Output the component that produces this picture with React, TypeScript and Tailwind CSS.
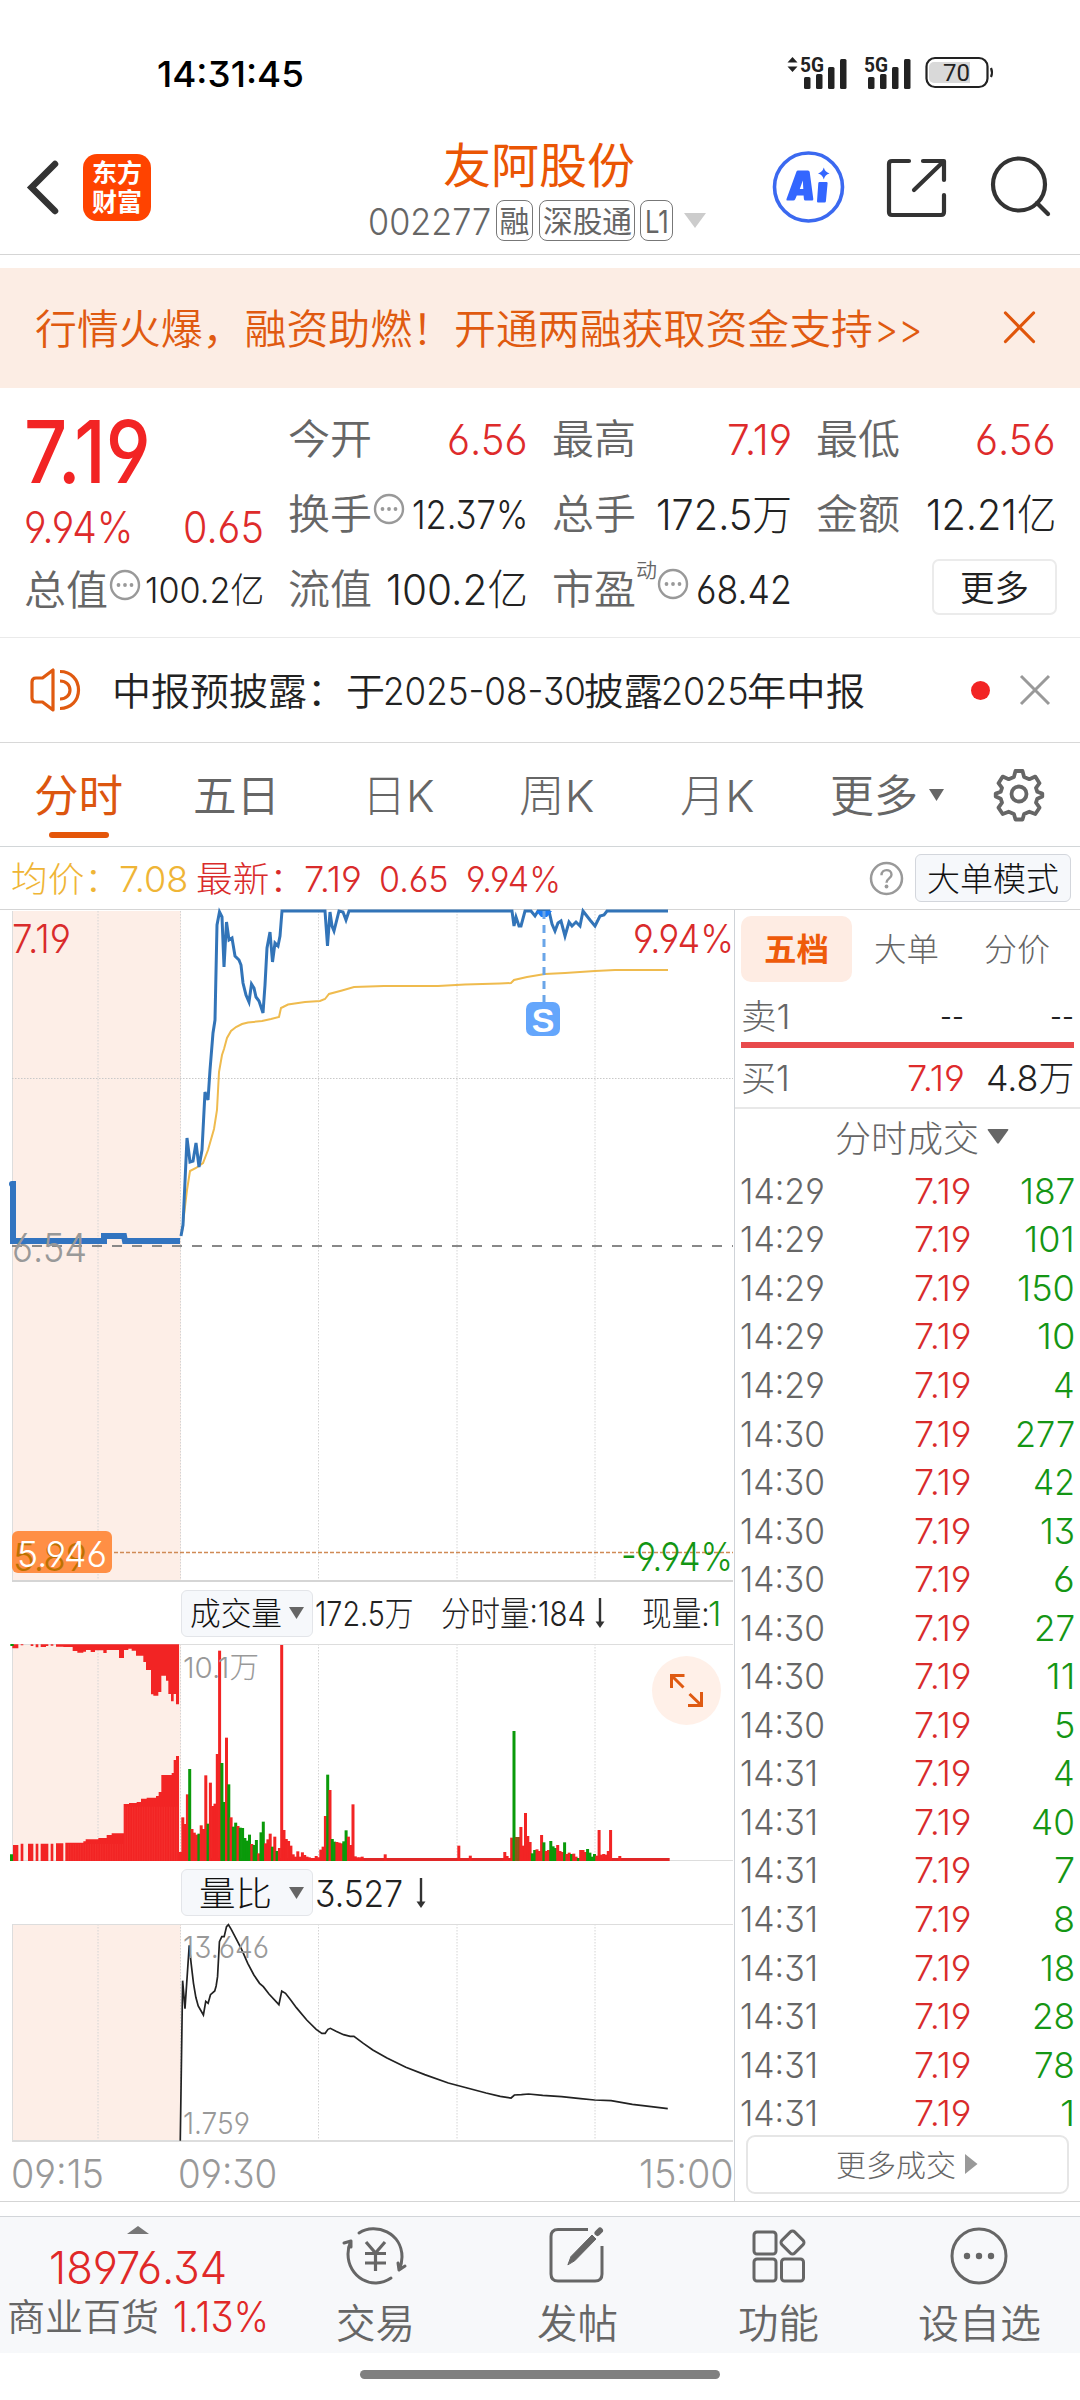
import { useLayoutEffect, useRef } from "react";
import type { ReactNode } from "react";

/** Single-line text that is stretched or condensed to fill the width given by its class. */
function Fit({ className, children }: { className: string; children: ReactNode }) {
  const outer = useRef<HTMLSpanElement>(null);
  const inner = useRef<HTMLSpanElement>(null);
  useLayoutEffect(() => {
    if (outer.current && inner.current) {
      const s = (outer.current.clientWidth + 2) / inner.current.offsetWidth;
      inner.current.style.transform = `translate(-1px, 1px) scaleX(${s})`;
    }
  }, []);
  return (
    <span ref={outer} className={`block shrink-0 whitespace-nowrap leading-none ${className}`}>
      <span ref={inner} className="inline-block origin-left whitespace-pre">
        {children}
      </span>
    </span>
  );
}

function Signal({ arrows }: { arrows?: boolean }) {
  return (
    <svg className="overflow-visible" width="64" height="36" viewBox="0 0 64 36" fill="#222">
      {arrows && <path d="M4.500 7.500 9.500 2l5 5.500zM4.500 11.500h10l-5 5.500z" />}
      <text x="17" y="17" fontSize="21" fontWeight="700" textLength="24" lengthAdjust="spacingAndGlyphs" fontFamily="Roboto, sans-serif">5G</text>
      <rect x="21" y="22" width="6.500" height="12" rx="1.500" />
      <rect x="33" y="19" width="6.500" height="15" rx="1.500" />
      <rect x="45" y="12" width="6.500" height="22" rx="1.500" />
      <rect x="57" y="4" width="6.500" height="30" rx="1.500" />
    </svg>
  );
}

function StatusBar() {
  return (
    <div className="flex h-[120px] items-center pt-[25px] pl-[158px]">
      <Fit className="w-[145px] text-[36px] font-medium text-black">14:31:45</Fit>
      <div className="ml-[480px] flex items-center">
        <Signal arrows />
        <Signal />
        <svg className="ml-[14px]" width="70" height="34" viewBox="0 0 70 34">
          <rect x="1.500" y="2" width="61" height="29" rx="8.500" fill="none" stroke="#222" strokeWidth="2.200" />
          <path d="M9 6h36v21H9a5 5 0 0 1-5-5V11a5 5 0 0 1 5-5z" fill="#d9d9d9" />
          <path d="M66 12q2 4.500 0 9" stroke="#222" strokeWidth="2.200" fill="none" />
          <text x="18" y="25" fontSize="24" textLength="27" fontFamily="Roboto, sans-serif" fill="#222">70</text>
        </svg>
      </div>
    </div>
  );
}

function Header() {
  return (
    <header className="flex h-[135px] border-b border-[#d5d5d5]">
      <svg className="mt-[38px] ml-[24px] shrink-0" width="38" height="60" viewBox="0 0 38 60" fill="none" stroke="#333" strokeWidth="6.500" strokeLinecap="round" strokeLinejoin="miter">
        <path d="M31 6 7.500 29.500 31 53" />
      </svg>
      <div className="mt-[34px] ml-[21px] flex h-[67px] w-[68px] shrink-0 flex-col items-center justify-center rounded-[14px] bg-[#ff4300] text-[25px] leading-[29px] font-bold text-white">
        <span>东方</span>
        <span>财富</span>
      </div>
      <div className="ml-[218px] w-[338px] shrink-0">
        <div className="mt-[21px] ml-[75px] text-[48px] leading-[50px] font-normal text-[#ea5504]">
          <Fit className="w-[190px]">友阿股份</Fit>
        </div>
        <div className="mt-[10px] flex h-[42px] items-center text-[#666]">
          <Fit className="w-[121px] text-[37px] font-light">002277</Fit>
          <span className="ml-[6px] flex h-[41px] w-[37px] items-center justify-center rounded-[8px] border border-[#777] text-[30px] leading-none">
            <Fit className="w-[28px]">融</Fit>
          </span>
          <span className="ml-[6px] flex h-[41px] w-[96px] items-center justify-center rounded-[8px] border border-[#777] text-[30px] leading-none">
            <Fit className="w-[87px]">深股通</Fit>
          </span>
          <span className="ml-[5px] flex h-[41px] w-[33px] items-center justify-center rounded-[8px] border border-[#777]">
            <Fit className="w-[22px] text-[31px]">L1</Fit>
          </span>
          <svg className="ml-[11px]" width="22" height="15" viewBox="0 0 22 15">
            <path d="M0 0h22L11 15z" fill="#ccc" />
          </svg>
        </div>
      </div>
      <svg className="mt-[31px] ml-[64px] shrink-0" width="74" height="74" viewBox="0 0 74 74">
        <circle cx="37.500" cy="36" r="34" fill="none" stroke="#3b69f0" strokeWidth="3.600" />
        <path fillRule="evenodd" d="M27 19.500h10q1.400 0 1.700 1.500l3.600 27q.2 1.600-1.300 1.600h-6.500q-1.500 0-1.600-1.600l-.3-3.400h-6.800l-1.600 3.600q-.6 1.400-2 1.400H16.500q-1.700 0-1-1.700l10-27.400q.4-1 1.500-1zm1.800 18.500h3.500l-.5-8.500z" fill="#3366ff" />
        <path d="M48.500 31h7q1.200 0 1.100 1.200l-1.700 18q-.1 1.200-1.300 1.200h-6.500q-1.200 0-1.100-1.200l1.300-18q.1-1.200 1.200-1.200zM52.800 16.500q1.200 4.500 5.700 6-4.500 1.200-5.700 6-1.300-4.800-5.800-6 4.500-1.500 5.800-6z" fill="#3366ff" />
      </svg>
      <svg className="mt-[36px] ml-[40px] shrink-0" width="62" height="64" viewBox="0 0 62 64" fill="none" stroke="#333" strokeWidth="4.200" strokeLinecap="round" strokeLinejoin="round">
        <path d="M24 5H7q-3 0-3 3v48q0 3 3 3h49q3 0 3-3V39M38 5h21v19M58 6 29 34" />
      </svg>
      <svg className="mt-[36px] ml-[43px] shrink-0" width="64" height="64" viewBox="0 0 64 64" fill="none" stroke="#333" strokeWidth="4.200" strokeLinecap="round">
        <circle cx="29" cy="28.500" r="26" />
        <path d="M47 47 58 58" />
      </svg>
    </header>
  );
}

function Banner() {
  return (
    <div className="mt-[13px] flex h-[120px] items-center bg-[#fcede4] pl-[36px] text-[41px] font-[350] text-[#e05a10]">
      <Fit className="w-[836px]">行情火爆，融资助燃！开通两融获取资金支持</Fit>
      <Fit className="ml-[3px] w-[47px]">&gt;&gt;</Fit>
      <svg className="ml-[80px]" width="36" height="36" viewBox="0 0 36 36" stroke="#e0560b" strokeWidth="3.200" strokeLinecap="round">
        <path d="M3.500 3 31.500 31.500M31.500 3 3.500 31.500" />
      </svg>
    </div>
  );
}

function Info({ className }: { className: string }) {
  return (
    <svg className={`shrink-0 ${className}`} width="32" height="32" viewBox="0 0 32 32">
      <circle cx="16" cy="16" r="14" fill="none" stroke="#999" strokeWidth="2.400" />
      <circle cx="9.500" cy="16" r="1.900" fill="#999" />
      <circle cx="16" cy="16" r="1.900" fill="#999" />
      <circle cx="22.500" cy="16" r="1.900" fill="#999" />
    </svg>
  );
}

const quoteRow = "flex h-[75px] items-center justify-between";
const label = "w-[82px] text-[41px] text-[#666]";

function Quote() {
  return (
    <section className="grid h-[250px] grid-cols-4 gap-x-[26px] border-b border-[#eaeaea] px-[25px] pt-[13px] font-[350]">
      <div>
        <div className="flex h-[99px] items-center">
          <Fit className="w-[125px] text-[86px] font-medium text-[#f22424]">7.19</Fit>
        </div>
        <div className="flex h-[52px] items-center justify-between text-[43px] font-light text-[#de2b2b]">
          <Fit className="w-[107px]">9.94%</Fit>
          <Fit className="w-[79px]">0.65</Fit>
        </div>
        <div className={quoteRow}>
          <Fit className={label}>总值</Fit>
          <Info className="mr-[3px] mb-[10px]" />
          <Fit className="w-[117px] text-[35px] font-light text-[#222]">100.2亿</Fit>
        </div>
      </div>
      <div>
        <div className={quoteRow}>
          <Fit className={label}>今开</Fit>
          <Fit className="w-[79px] text-[42px] font-light text-[#de2b2b]">6.56</Fit>
        </div>
        <div className={quoteRow}>
          <Fit className={label}>换手</Fit>
          <Info className="mr-[6px] mb-[10px]" />
          <Fit className="w-[114px] text-[39px] font-light text-[#222]">12.37%</Fit>
        </div>
        <div className={quoteRow}>
          <Fit className={label}>流值</Fit>
          <Fit className="w-[140px] text-[42px] font-light text-[#222]">100.2亿</Fit>
        </div>
      </div>
      <div>
        <div className={quoteRow}>
          <Fit className={label}>最高</Fit>
          <Fit className="w-[63px] text-[42px] font-light text-[#de2b2b]">7.19</Fit>
        </div>
        <div className={quoteRow}>
          <Fit className={label}>总手</Fit>
          <Fit className="w-[134px] text-[42px] font-light text-[#222]">172.5万</Fit>
        </div>
        <div className={quoteRow}>
          <Fit className={label}>市盈</Fit>
          <Fit className="mb-[38px] ml-[1px] w-[19px] text-[20px] text-[#666]">动</Fit>
          <Info className="mb-[10px]" />
          <Fit className="ml-[7px] w-[94px] text-[39px] font-light text-[#222]">68.42</Fit>
        </div>
      </div>
      <div>
        <div className={quoteRow}>
          <Fit className={label}>最低</Fit>
          <Fit className="w-[79px] text-[42px] font-light text-[#de2b2b]">6.56</Fit>
        </div>
        <div className={quoteRow}>
          <Fit className={label}>金额</Fit>
          <Fit className="w-[128px] text-[42px] font-light text-[#222]">12.21亿</Fit>
        </div>
        <div className="flex h-[75px] items-center justify-end">
          <div className="-mr-[2px] mb-[3px] flex h-[56px] w-[125px] items-center justify-center rounded-[7px] border-2 border-[#ebebeb] text-[#222]">
            <Fit className="w-[67px] text-[35px]">更多</Fit>
          </div>
        </div>
      </div>
    </section>
  );
}

function Notice() {
  return (
    <div className="flex h-[105px] items-center border-b border-[#d8d8d8] pl-[28px]">
      <svg width="54" height="50" viewBox="0 0 54 50" fill="none" stroke="#e05a10" strokeWidth="3.200" strokeLinejoin="round">
        <path d="M25 5v40L14.500 37H8q-4 0-4-4V17q0-4 4-4h6.500z" />
        <path d="M32 6.500c11 0 18.500 8 18.500 18.500S43 43.500 32 43.500" />
        <path d="M32 16c6 0 10 4 10 9s-4 9-10 9" />
      </svg>
      <div className="ml-[31px] flex w-[751px] text-[38px] font-[350] text-[#222]">
        <Fit className="w-[271px]">中报预披露：于</Fit>
        <Fit className="w-[201px] font-light">2025-08-30</Fit>
        <Fit className="w-[77px]">披露</Fit>
        <Fit className="w-[86px] font-light">2025</Fit>
        <Fit className="w-[116px]">年中报</Fit>
      </div>
      <span className="ml-[107px] size-[19px] rounded-full bg-[#f22424]" />
      <svg className="ml-[29px]" width="32" height="32" viewBox="0 0 32 32" stroke="#999" strokeWidth="3">
        <path d="M2 2 30 30M30 2 2 30" />
      </svg>
    </div>
  );
}

function Tabs() {
  return (
    <nav className="flex h-[104px] items-center border-b border-[#d2d6d8] text-[44px] font-[350] text-[#666]">
      <div className="relative ml-[35px] font-normal text-[#dc560f]">
        <Fit className="w-[87px]">分时</Fit>
        <span className="absolute top-[59px] left-[14px] h-[6px] w-[60px] rounded-full bg-[#e4560a]" />
      </div>
      <Fit className="ml-[72px] w-[85px]">五日</Fit>
      <Fit className="ml-[84px] w-[70px] font-light">日K</Fit>
      <Fit className="ml-[87px] w-[73px] font-light">周K</Fit>
      <Fit className="ml-[88px] w-[72px] font-light">月K</Fit>
      <Fit className="ml-[78px] w-[86px]">更多</Fit>
      <svg className="ml-[12px]" width="15" height="12" viewBox="0 0 15 12">
        <path d="M0 0h15L7.500 12z" fill="#666" />
      </svg>
      <svg className="mb-[2px] ml-[46px]" width="58" height="58" viewBox="0 0 58 58" fill="none" stroke="#666" strokeWidth="3.800" strokeLinejoin="round">
        <path d="M25.500 6h7l1.600 6 5.200 2.200 6-2.600 4.200 6.600-3.500 4.600 1.300 4 5 1.800v2.800l-5 2.300-1.300 4 3.500 5-4.200 6.300-6-2.300-5.200 2.200-1.600 5.600h-7l-1.600-5.600-5.200-2.200-6 2.300-4.200-6.300 3.500-5-1.300-4-5-2.300v-2.800l5-1.800 1.300-4-3.500-4.600 4.200-6.600 6 2.600 5.200-2.200z" />
        <circle cx="29" cy="29" r="7.500" />
      </svg>
    </nav>
  );
}

function Summary() {
  return (
    <div className="flex h-[63px] items-center border-b border-[#d5d5d5] pl-[12px] text-[35px] font-light">
      <div className="flex text-[#efb536]">
        <Fit className="w-[108px]">均价：</Fit>
        <Fit className="w-[67px]">7.08</Fit>
      </div>
      <div className="ml-[10px] flex text-[#d92b2b]">
        <Fit className="w-[108px]">最新：</Fit>
        <Fit className="w-[56px]">7.19</Fit>
        <Fit className="ml-[19px] w-[68px]">0.65</Fit>
        <Fit className="ml-[19px] w-[93px]">9.94%</Fit>
      </div>
      <svg className="ml-[309px]" width="35" height="35" viewBox="0 0 35 35">
        <circle cx="17.500" cy="17.500" r="15.500" fill="none" stroke="#999" strokeWidth="2.500" />
        <path d="M12.500 14.200c0-7 10-6.500 10-.5 0 3.700-5 3.700-5 8" fill="none" stroke="#999" strokeWidth="2.400" />
        <circle cx="17.500" cy="25.500" r="1.900" fill="#999" />
      </svg>
      <div className="ml-[11px] flex h-[48px] w-[156px] items-center justify-center rounded-[6px] border border-[#d3d6dc] bg-[#f6f8fb] text-[33px] text-[#111]">
        <Fit className="w-[130px]">大单模式</Fit>
      </div>
    </div>
  );
}

const gridX = [98, 318.5, 457, 595];

function Grid({ top, bottom }: { top: number; bottom: number }) {
  return (
    <g>
      <rect x="12" y={top} width="169" height={bottom - top} fill="#fdeee7" />
      <path d={`M12.500 ${top}V${bottom}`} stroke="#ddd" />
      {[...gridX, 180.5].map((x) => (
        <path key={x} d={`M${x} ${top}V${bottom}`} stroke="#d4d4d4" strokeDasharray="1.500 1.500" />
      ))}
    </g>
  );
}

const pricePts =
  "181,1236 183,1225 187,1138 190,1162 193,1161 196,1143 199,1167 202,1150 205,1092 208,1100 210,1070 213,1033 215,1020 217,925 219.5,912 222,917 224,967 226.500,922 229,940 232,938 235,956 239,960 241,965 243,983 246,995 249,1002 251.500,984 254,988 256,997 259,1001 263,1013 265,985 267,948 270,932 272.5,962 275,943 278,946 280,936 282,911 325,911 327.5,946 330,912 332,926 334,931 339,911 343,912 346,920 349,911 512,911 514,926 516,917 519,926 521,926 525,911 531,911 535,916 538,911 549,911 552,924 555,931 558,923 561,921 565,936 569,922 572,926 576,922 580,926 583,911 590,920 595,926 600,916 604,915 607,911 668,911";
const avgPts =
  "182,1232 187,1190 190,1171 196,1168 203,1163 208,1150 214,1129 217,1110 219,1072 222,1055 224,1049 227,1038 231,1031 236,1027 242,1024 248,1022.500 262,1021 271,1019 279,1017 281,1008 288,1004.500 305,1002 320,1001 325,999 329,994 342,990.500 354,987 384,986 438,986 465,984.5 500,983.5 511,983 514,980 527,977 545,974 565,973 595,971 615,970 668,970";

function PriceChart() {
  return (
    <svg className="block overflow-visible" width="734" height="673" viewBox="0 910 734 673" fill="none">
      <Grid top={911} bottom={1581} />
      <path d="M12 1078.500H733" stroke="#c9c9c9" strokeDasharray="1.500 1.500" />
      <path d="M12 1246H733" stroke="#888" strokeWidth="2" strokeDasharray="10 10" />
      <path d="M12 1552.500H733" stroke="#d08a55" strokeWidth="1.600" strokeDasharray="4 2" />
      <path d="M12 1581H733" stroke="#d5d5d5" strokeWidth="2" />
      <polyline points={avgPts} stroke="#efbb4e" strokeWidth="2" />
      <polyline points="12,1184 13,1184 13,1241 104,1241 104,1236 124,1236 125,1241 180,1241" stroke="#3274c0" strokeWidth="6" />
      <circle cx="12" cy="1184" r="3" fill="#3274c0" />
      <polyline points={pricePts} stroke="#3274b8" strokeWidth="3" />
      <path d="M536 911h16l-5 6h-6z" fill="#1b7bf5" />
      <path d="M544 911V1002" stroke="#6aa5e8" strokeWidth="3" strokeDasharray="8 6" />
      <rect x="526" y="1002" width="34" height="34" rx="7" fill="#64a6fc" />
      <text x="543" y="1032" textAnchor="middle" fontSize="34" fontWeight="700" fill="#fff" fontFamily="Liberation Sans, sans-serif">S</text>
      <g fontSize="39" fontWeight="300">
        <text x="12" y="953" fill="#d92b2b" textLength="59" lengthAdjust="spacingAndGlyphs">7.19</text>
        <text x="633" y="953" fill="#d92b2b" textLength="101" lengthAdjust="spacingAndGlyphs">9.94%</text>
        <text x="12" y="1262" fill="#999" textLength="75" lengthAdjust="spacingAndGlyphs">6.54</text>
        <text x="621" y="1571" fill="#149614" textLength="112" lengthAdjust="spacingAndGlyphs">-9.94%</text>
      </g>
      <rect x="12" y="1531" width="100" height="42" rx="6" fill="#ff8f45" />
      <text x="13" y="1571" fontSize="38" fill="#bd7100" textLength="74" lengthAdjust="spacingAndGlyphs">5.89</text>
      <text x="17" y="1567" fontSize="36" fill="#fff" textLength="90" lengthAdjust="spacingAndGlyphs">5.946</text>
    </svg>
  );
}

// Minute volumes: top edge of each bar (1023 is the baseline) and its colour key.
const early =
  "996r 892r 912r 823r 747g 927r 938r 944r 941g 916r 927r 766r 911g 788r 858r 851r 702r 392r 729g 846g 653r 793g 892r 920g 908g 918r 923g 924g 954g 962g 944g 972r 975g 960g 1000r 937g 905g 970r 958r 941r 980g 950r 993g 984r 375r 930r 957r 963r 977r 1003r 1010r 994r 1010r 997r 1005r 1010r 1012r 1014r 1014r 1008r 1012r 989r 980r 888r 764g 810r 957g 965g 966r 968r 970r 964g 931g 950r 975r 853r 1009r 1012r 1012r 1010r";
const late =
  "953r 633g 951b 951b 921r 977r 879r 948r 966r 1000g 990g 988r 993r 945r 967g 993r 990r 963g 979g 984g 975r 993r 996r 967g 1002r 998r 1002g 1001r 1010r 1014g 990r 990r 996r 987g 998g 1010g 1002g 1007r 930r 1004r 1002r 1004r 993r 930r";
const single: [number, string][] = [
  [89, "1003r"],
  [121, "977r"],
  [126, "1007r"],
  [141, "996r"],
  [142, "1008r"],
  [191, "1008r"],
];
const minuteBars: [number, string][] = [
  ...early.split(" ").map((v, i): [number, string] => [i, v]),
  ...late.split(" ").map((v, i): [number, string] => [i + 144, v]),
  ...single,
];
const barColor: Record<string, string> = { r: "#f22424", g: "#0a9a0a", b: "#8c5614" };

const preBids =
  "M37 373V385H55V373H62V376H70V373H92V378H100V373H107V382H115V373H122V381H138V378H145V373H152V377H160V373H168V380H190V381H218V393H232V398H250V395H258V390H272V396H285V391H310V399H320V390H357V414H372V390H385V386H395V392H408V407H430V426H438V450H453V523H460V527H475V516H484V467H498V482H505V522H513V544H521V522H528V553H537V373Z";
const preMatched =
  "M39 1023V975H55V1023ZM62 1023V971H70V1023ZM84 1023V971H100V1023ZM107 1023V971H115V1023ZM122 1023V971H145V1023ZM152 1023V971H160V1023ZM168 1023V970H190V1023ZM196 1023V968H250V964H257V958H295V954H320V945H335V940H371V852H387V849H410V846H423V836H440V833H468V828H476V816H484V765H515V759H521V720H528V708H537V1023Z";

function VolumeChart() {
  return (
    <svg className="block" width="734" height="220" viewBox="0 1643 734 220" fill="none">
      <Grid top={1644} bottom={1861} />
      <path d="M12 1644.500H733M12 1860.500H733" stroke="#ddd" />
      <g transform="translate(0 1520) scale(.33333)">
        <path d={preBids} fill="#f22424" />
        <path d={preMatched} fill="#f22424" />
        <path d="M31 372h10v6h-10zM30 1003h9v20h-9z" fill="#0a9a0a" />
        {Array.from({ length: 45 }, (_, i) => (
          <path key={i} d={`M${205 + i * 7.4} ${i > 22 ? 860 : 972}V1022`} stroke="#ff5a50" strokeWidth="1" opacity=".6" />
        ))}
        <rect x="541" y="1014" width="1468" height="9" fill="#e02828" />
        {minuteBars.map(([i, v]) => {
          const y = parseInt(v, 10);
          return <rect key={i} x={537 + i * 6.9} y={y} width="9" height={1023 - y} fill={barColor[v.slice(-1)]} />;
        })}
      </g>
      <text x="183" y="1678" fontSize="29" fontWeight="300" fill="#999" textLength="76" lengthAdjust="spacingAndGlyphs">10.1万</text>
      <circle cx="686.500" cy="1690.500" r="34.500" fill="#fff0e8" />
      <path d="M671.500 1688v-12.500h13M672 1676l11.500 11.500M688 1705.500h13.500V1692M689.500 1694 701 1705" stroke="#df5a12" strokeWidth="3" />
    </svg>
  );
}

const ratioPts =
  "382,842 387,362 392,446 401,256 405,310 410,370 415,412 420,438 431,465 436,424 441,430 446,404 455,393 458,378 461,350 465,245 470,230 475,230 480,200 484,194 490,208 500,235 512,268 525,310 538,345 550,370 558,380 570,402 591,434 597,393 605,400 616,420 628,443 650,480 670,508 682,520 689,520 695,508 700,505 712,514 728,524 742,529 750,529 770,550 790,570 820,594 860,622 900,644 950,669 990,684 1030,699 1060,709 1083,714 1090,705 1105,704 1120,702 1150,706 1190,710 1230,716 1260,720 1295,722 1340,733 1380,740 1415,746";

function RatioChart() {
  return (
    <svg className="block" width="734" height="221" viewBox="0 1922 734 221" fill="none">
      <Grid top={1924} bottom={2141} />
      <path d="M12 1924.500H733" stroke="#ddd" />
      <path d="M12 2141H733" stroke="#ddd" strokeWidth="2" />
      <polyline transform="translate(0 1860) scale(.47192 .33333)" points={ratioPts} stroke="#222" strokeWidth="1.700" vectorEffect="non-scaling-stroke" />
      <g fontSize="30" fontWeight="300" fill="#999">
        <text x="183" y="1957.500" textLength="86" lengthAdjust="spacingAndGlyphs">13.646</text>
        <text x="183" y="2133.500" textLength="67" lengthAdjust="spacingAndGlyphs">1.759</text>
      </g>
    </svg>
  );
}

function Selector({ children }: { children: ReactNode }) {
  return (
    <div className="ml-[181px] flex h-[47px] w-[132px] shrink-0 items-center justify-end rounded-[6px] border border-[#e3e5e9] bg-[#f6f8fb] pr-[8px] text-[32px] text-[#111]">
      {children}
      <svg className="shrink-0" width="15" height="12" viewBox="0 0 15 12">
        <path d="M0 0h15L7.500 12z" fill="#666" />
      </svg>
    </div>
  );
}

function DownArrow() {
  return (
    <svg className="shrink-0" width="10" height="32" viewBox="0 0 10 32">
      <path d="M5 1v26" stroke="#333" strokeWidth="2.400" />
      <path d="M.5 24.500h9L5 31z" fill="#333" />
    </svg>
  );
}

function Charts() {
  return (
    <div className="w-[734px] shrink-0 font-light">
      <PriceChart />
      <div className="flex h-[60px] items-center text-[34px] text-[#222]">
        <Selector>
          <Fit className="mr-[8px] w-[90px]">成交量</Fit>
        </Selector>
        <Fit className="ml-[3px] w-[97px]">172.5万</Fit>
        <Fit className="ml-[29px] w-[143px]">分时量:184</Fit>
        <span className="ml-[10px]">
          <DownArrow />
        </span>
        <div className="ml-[38px] flex">
          <Fit className="w-[66px]">现量:</Fit>
          <Fit className="w-[11px] text-[#149614]">1</Fit>
        </div>
      </div>
      <VolumeChart />
      <div className="flex h-[59px] items-center text-[37px] text-[#222]">
        <Selector>
          <Fit className="mr-[18px] w-[71px] text-[34px]">量比</Fit>
        </Selector>
        <Fit className="ml-[3px] w-[86px]">3.527</Fit>
        <span className="ml-[14px]">
          <DownArrow />
        </span>
      </div>
      <RatioChart />
      <div className="flex h-[58px] items-center pl-[12px] text-[39px] text-[#999]">
        <Fit className="w-[91px]">09:15</Fit>
        <Fit className="ml-[76px] w-[97px]">09:30</Fit>
        <Fit className="ml-[364px] w-[93px]">15:00</Fit>
      </div>
    </div>
  );
}

const trades: [string, string, string][] = [
  ["14:29", "187", "w-[53px]"],
  ["14:29", "101", "w-[49px]"],
  ["14:29", "150", "w-[56px]"],
  ["14:29", "10", "w-[36px]"],
  ["14:29", "4", "w-[20px]"],
  ["14:30", "277", "w-[58px]"],
  ["14:30", "42", "w-[40px]"],
  ["14:30", "13", "w-[33px]"],
  ["14:30", "6", "w-[20px]"],
  ["14:30", "27", "w-[39px]"],
  ["14:30", "11", "w-[27px]"],
  ["14:30", "5", "w-[19px]"],
  ["14:31", "4", "w-[20px]"],
  ["14:31", "40", "w-[42px]"],
  ["14:31", "7", "w-[19px]"],
  ["14:31", "8", "w-[20px]"],
  ["14:31", "18", "w-[33px]"],
  ["14:31", "28", "w-[41px]"],
  ["14:31", "78", "w-[39px]"],
  ["14:31", "1", "w-[13px]"],
];

function OrderPanel() {
  return (
    <aside className="flex w-[346px] flex-col border-l border-[#cfd3d8] font-light">
      <div className="mt-[6px] ml-[6px] flex h-[66px] items-center text-[32px] text-[#666]">
        <div className="flex h-full w-[111px] items-center justify-center rounded-[10px] bg-[#feece3] font-bold text-[#ee5a0a]">
          <Fit className="w-[63px]">五档</Fit>
        </div>
        <Fit className="ml-[23px] w-[63px]">大单</Fit>
        <Fit className="ml-[47px] w-[64px]">分价</Fit>
      </div>
      <div className="flex h-[60px] items-center pt-[7px] pl-[7px] text-[34px] text-[#666]">
        <Fit className="w-[47px]">卖1</Fit>
        <Fit className="ml-[152px] w-[22px] text-[#222]">--</Fit>
        <Fit className="ml-[88px] w-[22px] text-[#222]">--</Fit>
      </div>
      <div className="ml-[6px] h-[6px] w-[333px] bg-[#e84a4c]" />
      <div className="flex h-[61px] items-center border-b-2 border-[#e8e8e8] pr-[7px] pl-[7px] text-[35px] text-[#666]">
        <Fit className="w-[47px]">买1</Fit>
        <Fit className="ml-[119px] w-[56px] text-[#de2b2b]">7.19</Fit>
        <Fit className="ml-[23px] w-[86px] text-[#222]">4.8万</Fit>
      </div>
      <div className="flex h-[57px] items-center pl-[101px] text-[36px] text-[#666]">
        <Fit className="w-[142px]">分时成交</Fit>
        <svg className="mb-[3px] ml-[9px]" width="22" height="15" viewBox="0 0 22 15">
          <path d="M1.500 0h19q1.500 0 .5 1.500l-9 12.500q-1 1.300-2 0L1 1.500Q0 0 1.500 0z" fill="#666" />
        </svg>
      </div>
      {trades.map(([time, volume, width], i) => (
        <div key={i} className="flex h-[48.550px] shrink-0 items-center pr-[6px] pb-[1px] pl-[6px] text-[36px]">
          <Fit className={time === "14:31" ? "w-[76px] text-[#666]" : "w-[83px] text-[#666]"}>{time}</Fit>
          <Fit className={time === "14:31" ? "ml-[98px] w-[56px] text-[#d92b2b]" : "ml-[91px] w-[56px] text-[#d92b2b]"}>7.19</Fit>
          <div className="flex flex-1 justify-end text-[#149614]">
            <Fit className={width}>{volume}</Fit>
          </div>
        </div>
      ))}
      <div className="mt-[-2px] ml-[11px] flex h-[59px] w-[323px] shrink-0 items-center rounded-[9px] border-2 border-[#e6e6e6] pl-[89px] text-[#666]">
        <Fit className="w-[118px] text-[30px]">更多成交</Fit>
        <svg className="ml-[10px]" width="13" height="20" viewBox="0 0 13 20">
          <path d="M0 0 12.500 10 0 20z" fill="#999" />
        </svg>
      </div>
    </aside>
  );
}

function BottomItem({ className, icon, text }: { className: string; icon: ReactNode; text: ReactNode }) {
  return (
    <div className={`flex shrink-0 flex-col items-center ${className}`}>
      <svg className="mt-[7px]" width="66" height="64" viewBox="0 0 66 64" fill="none" stroke="#666" strokeWidth="3" strokeLinecap="round" strokeLinejoin="round">
        {icon}
      </svg>
      <div className="mt-[15px] text-[40px] text-[#666]">{text}</div>
    </div>
  );
}

function BottomBar() {
  return (
    <footer className="mt-[14px] flex h-[137px] border-t border-[#d2d5d9] bg-[#f7f8fa] font-[350]">
      <div className="w-[274px] shrink-0">
        <svg className="mt-[9px] ml-[127px]" width="22" height="8" viewBox="0 0 22 8">
          <path d="M0 8 11 0l11 8z" fill="#777" />
        </svg>
        <Fit className="mt-[10px] ml-[50px] w-[176px] text-[45px] font-light text-[#e02828]">18976.34</Fit>
        <div className="mt-[6px] flex items-center">
          <Fit className="ml-[8px] w-[150px] text-[37px] text-[#666]">商业百货</Fit>
          <Fit className="ml-[16px] w-[94px] text-[42px] font-light text-[#e02828]">1.13%</Fit>
        </div>
      </div>
      <BottomItem
        className="w-[202px]"
        text={<Fit className="w-[77px]">交易</Fit>}
        icon={
          <>
            <path d="M17 9C34-2 60 9 60 33c0 5-1 9-3 13M57 46l6-4M57 46l-1-7" />
            <path d="M49 54C30 67 6 53 6 30c0-5 1-9 3-13M9 17l-7 2M9 17l0 6" />
            <path d="M24 18l9.500 11L43 18M23 29.500h21M23 39h21M33.500 29.500V47" strokeWidth="3.200" strokeLinecap="butt" />
          </>
        }
      />
      <BottomItem
        className="w-[202px]"
        text={<Fit className="w-[79px]">发帖</Fit>}
        icon={
          <>
            <path d="M44 5.500H14q-7 0-7 7V50q0 7 7 7h37q7 0 7-7V22" strokeLinecap="butt" />
            <path d="M24 40.500l3-8L48 11l4 4-21 21.500z" fill="#666" strokeWidth="1" />
            <path d="M53.500 9 56 6.500" strokeWidth="6" />
          </>
        }
      />
      <BottomItem
        className="w-[201px]"
        text={<Fit className="w-[79px]">功能</Fit>}
        icon={
          <>
            <rect x="8" y="8" width="22" height="22" rx="3" />
            <rect x="8" y="35" width="22" height="22" rx="3" />
            <rect x="35.500" y="35" width="22" height="22" rx="3" />
            <rect x="37.500" y="9.500" width="18" height="18" rx="3" transform="rotate(45 46.500 18.500)" />
          </>
        }
      />
      <BottomItem
        className="w-[200px]"
        text={<Fit className="w-[121px]">设自选</Fit>}
        icon={
          <>
            <circle cx="33" cy="32" r="27" />
            <g fill="#666" stroke="none">
              <circle cx="21" cy="32" r="3.200" />
              <circle cx="33" cy="32" r="3.200" />
              <circle cx="45" cy="32" r="3.200" />
            </g>
          </>
        }
      />
    </footer>
  );
}

export default function App() {
  return (
    <div className="h-[2400px] w-[1080px] overflow-hidden bg-white font-['Inter','Noto_Sans_CJK_SC',sans-serif] leading-none [font-feature-settings:'cv03','cv04','cv09']">
      <StatusBar />
      <Header />
      <Banner />
      <Quote />
      <Notice />
      <Tabs />
      <Summary />
      <div className="flex h-[1292px] border-b border-[#d5d5d5]">
        <Charts />
        <OrderPanel />
      </div>
      <BottomBar />
      <div className="mx-auto mt-[17px] h-[9px] w-[360px] rounded-full bg-[#808080]" />
    </div>
  );
}
